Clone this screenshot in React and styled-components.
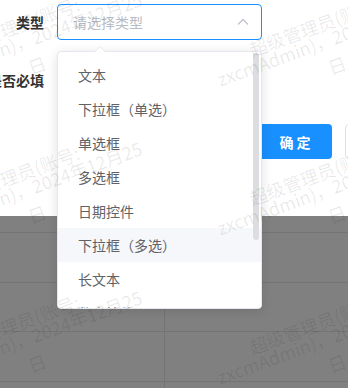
import React from "react";
import styled, { createGlobalStyle } from "styled-components";

const GlobalStyle = createGlobalStyle`
  html, body {
    margin: 0;
    padding: 0;
    background: #fff;
  }
  body {
    font-family: "Noto Sans CJK SC", "Noto Sans", sans-serif;
    font-size: 14px;
  }
`;

const options = [
  "文本",
  "下拉框（单选）",
  "单选框",
  "多选框",
  "日期控件",
  "下拉框（多选）",
  "长文本",
  "数字控件",
];

const Page = () => {
  return (
    <Screen>
      <GlobalStyle />
      <Dialog>
        <Form>
          <FormRow>
            <Label>类型</Label>
            <Select>
              <SelectInput>
                <Placeholder>请选择类型</Placeholder>
                <svg width="12" height="8" viewBox="0 0 12 8">
                  <polyline points="1,6.5 6,1.5 11,6.5" fill="none" stroke="#c0c4cc" strokeWidth="1.3" />
                </svg>
              </SelectInput>
              <Dropdown>
                <Arrow />
                <OptionList>
                  {options.map((o, i) => (
                    <Option key={o} $hover={i === 5}>{o}</Option>
                  ))}
                </OptionList>
                <Thumb />
              </Dropdown>
            </Select>
          </FormRow>
          <FormRow $tall>
            <Label>是否必填</Label>
          </FormRow>
        </Form>
        <Footer>
          <PrimaryButton>确 定</PrimaryButton>
          <PlainButton>取 消</PlainButton>
        </Footer>
      </Dialog>
      <Mask>
        <TableRow $h={16} />
        <TableRow $h={49} />
        <TableRow $h={48} />
        <TableRow $h={49} />
        <TableRow $h={49} />
      </Mask>
      <Watermark />
    </Screen>
  );
};

// watermark text repeats every 300px across and 149px down
const Watermark = () => {
  const blocks = [];
  for (let r = 0; r < 3; r++) {
    for (let c = 0; c < 2; c++) {
      blocks.push([32 + c * 300, 46 + r * 149]);
    }
  }
  return (
    <WatermarkLayer width="348" height="388">
      {blocks.map(([x, y]) => (
        <g key={x + "-" + y} transform={`translate(${x} ${y}) rotate(-20)`}>
          <text x="-10" y="-17" textAnchor="middle">超级管理员(账号:</text>
          <text x="0" y="0" textAnchor="middle">zxcmAdmin)，2024年12月25</text>
          <text x="-2" y="27" textAnchor="middle">日</text>
        </g>
      ))}
    </WatermarkLayer>
  );
};

export default Page;

const Screen = styled.div`
  position: relative;
  width: 348px;
  height: 388px;
  overflow: hidden;
  display: flex;
  flex-direction: column;
  background: #808080;
`;

const Dialog = styled.div`
  height: 216px;
  flex-shrink: 0;
  background: #fff;
  position: relative;
  z-index: 2;
`;

const Form = styled.div`
  padding-top: 4px;
  display: flex;
  flex-direction: column;
`;

const FormRow = styled.div`
  display: flex;
  align-items: ${(p) => (p.$tall ? "center" : "flex-start")};
  gap: 13px;
  height: ${(p) => (p.$tall ? "80px" : "36px")};
`;

const Label = styled.div`
  width: 44px;
  flex-shrink: 0;
  display: flex;
  justify-content: flex-end;
  white-space: nowrap;
  line-height: 36px;
  font-size: 14px;
  font-weight: 600;
  color: #333;
`;

const Select = styled.div`
  position: relative;
  width: 205px;
`;

const SelectInput = styled.div`
  box-sizing: border-box;
  height: 36px;
  border: 1px solid #1890ff;
  border-radius: 4px;
  display: flex;
  align-items: center;
  justify-content: space-between;
  padding: 0 12px 0 15px;
  background: #fff;
`;

const Placeholder = styled.span`
  color: #b8bbc1;
  font-size: 14px;
`;

const Dropdown = styled.div`
  position: absolute;
  top: 47px;
  left: 0;
  width: 100%;
  height: 258px;
  box-sizing: border-box;
  background: #fff;
  border: 1px solid #e4e7ed;
  border-radius: 4px;
  box-shadow: 0 2px 12px rgba(0, 0, 0, 0.12);
  z-index: 20;
`;

const Arrow = styled.div`
  position: absolute;
  top: -6px;
  left: 36px;
  width: 0;
  height: 0;
  border-left: 6px solid transparent;
  border-right: 6px solid transparent;
  border-bottom: 6px solid #e4e7ed;
  &::after {
    content: "";
    position: absolute;
    top: 1px;
    left: -5px;
    border-left: 5px solid transparent;
    border-right: 5px solid transparent;
    border-bottom: 5px solid #fff;
  }
`;

const OptionList = styled.ul`
  list-style: none;
  margin: 0;
  padding: 6px 0 0;
  height: 100%;
  box-sizing: border-box;
  overflow: hidden;
  border-radius: 4px;
`;

const Option = styled.li`
  height: 34px;
  line-height: 34px;
  padding: 0 20px;
  font-size: 14px;
  color: #606266;
  white-space: nowrap;
  background: ${(p) => (p.$hover ? "#f5f7fa" : "#fff")};
`;

const Thumb = styled.div`
  position: absolute;
  top: 1px;
  right: 2px;
  width: 6px;
  height: 187px;
  border-radius: 3px;
  background: #dcdde0;
`;

const Footer = styled.div`
  display: flex;
  gap: 13px;
  padding: 0 0 0 258px;
  margin-top: 4px;
`;

const PrimaryButton = styled.button`
  flex-shrink: 0;
  width: 74px;
  height: 35px;
  border: none;
  border-radius: 4px;
  background: #1890ff;
  color: #fff;
  font-family: inherit;
  font-size: 14px;
  font-weight: 600;
`;

const PlainButton = styled.button`
  flex-shrink: 0;
  width: 74px;
  height: 35px;
  border: 1px solid #dcdfe6;
  border-radius: 4px;
  background: #fff;
  color: #606266;
  font-family: inherit;
  font-size: 14px;
`;

const Mask = styled.div`
  flex: 1;
  background: #808080;
  position: relative;
  &::before {
    content: "";
    position: absolute;
    top: 0;
    bottom: 0;
    left: 164px;
    width: 1px;
    background: #747474;
  }
`;

const TableRow = styled.div`
  height: ${(p) => p.$h}px;
  border-bottom: 1px solid #747474;
`;

const WatermarkLayer = styled.svg`
  position: absolute;
  top: 0;
  left: 0;
  pointer-events: none;
  z-index: 50;
  font-family: "Noto Sans CJK SC", sans-serif;
  font-size: 18px;
  fill: rgba(0, 0, 0, 0.09);
`;
